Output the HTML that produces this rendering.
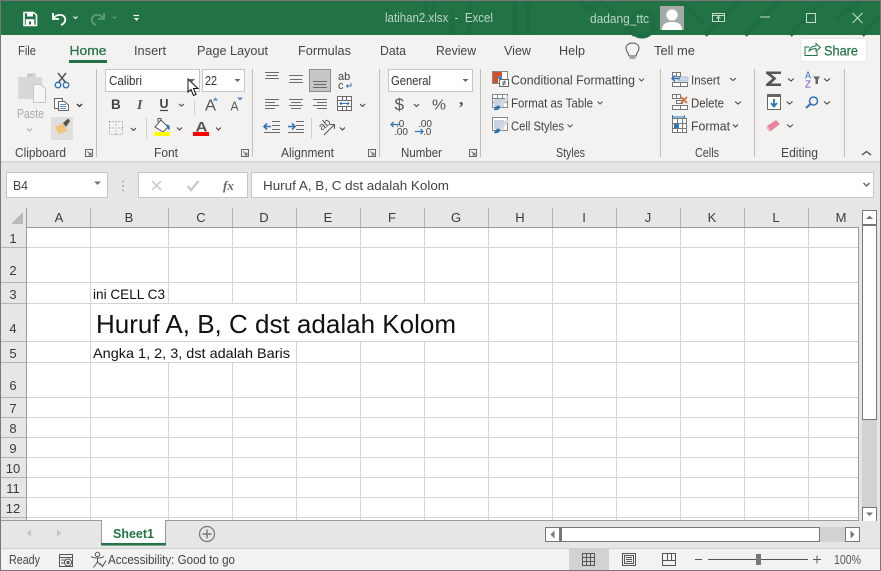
<!DOCTYPE html>
<html><head><meta charset="utf-8"><style>
html,body{margin:0;padding:0;width:881px;height:571px;overflow:hidden;background:#fff}
svg{display:block}
text{font-family:"Liberation Sans",sans-serif;font-size:13px;fill:#444}
.g{stroke:#d4d4d4;stroke-width:1;fill:none}
.h{font-size:13px;fill:#3a3a3a;text-anchor:middle}
.c{fill:none;stroke:#555;stroke-width:1.3}
.l{stroke:#6a6a6a;stroke-width:1;fill:none}
.sep{stroke:#bdbdbd;stroke-width:1;fill:none}
</style></head><body>
<svg width="881" height="571" viewBox="0 0 881 571" xmlns="http://www.w3.org/2000/svg" shape-rendering="auto">
<rect width="881" height="571" fill="#f3f2f1"/>
<!-- title bar -->
<rect x="0" y="0" width="881" height="35" fill="#217346"/>
<g fill="none" stroke="#1f6d42" stroke-width="5">
<path d="M426 0V14M434 0V14M452 10V35M470 0V35M515 0V35M527 0V35M600 0L635 35M680 0L705 25"/>
<circle cx="642" cy="24" r="12"/><circle cx="590" cy="-2" r="10"/><path d="M705 35L740 0M745 35L780 0M790 35L825 0M835 20L860 0M862 35L881 15"/>
</g>
<!-- QAT -->
<g fill="none" stroke="#fff" stroke-width="1.6">
<path d="M24 12.500H33.500L36.500 15V25.500H24Z"/><rect x="27" y="13" width="6" height="3.500" fill="#fff" stroke="none"/><rect x="26.500" y="20" width="7" height="5" fill="#217346"/><rect x="27" y="20.500" width="6" height="4.500" fill="#fff" stroke="none"/><rect x="29" y="21.500" width="2" height="3" fill="#217346" stroke="none"/>
<path d="M53 13V19H59" stroke-width="1.800"/><path d="M53.500 18.500C56 14 63 13.500 65 18C66 21 64 24 61 25" stroke-width="1.800"/>
<path d="M73.500 16.500L75.500 18.500L77.500 16.500" stroke-width="1"/>
<g stroke="#5f9a79"><path d="M104 13V19H98" stroke-width="1.800"/><path d="M103.500 18.500C101 14 94 13.500 92 18C91 21 93 24 96 25" stroke-width="1.800"/><path d="M112.500 16.500L114.500 18.500L116.500 16.500" stroke-width="1"/></g>
<path d="M133.500 15.500H139" stroke-width="1.200"/><path d="M134 18H139L136.500 21Z" fill="#fff" stroke="none"/>
</g>
<text x="385" y="22" textLength="108" lengthAdjust="spacingAndGlyphs" style="fill:#bcd5c6;font-size:12.500px">latihan2.xlsx&#160; -&#160; Excel</text>
<text x="590" y="23" textLength="59" lengthAdjust="spacingAndGlyphs" style="fill:#bcd5c6;font-size:12.500px">dadang_ttc</text>
<rect x="660" y="6" width="24" height="24" fill="#a5aaa7"/>
<circle cx="672" cy="15" r="5.600" fill="#fff"/><path d="M662 30C662 24 666 22 672 22C678 22 682 24 682 30Z" fill="#fff"/>
<g fill="none" stroke="#c6dccf" stroke-width="1">
<rect x="712.500" y="13.500" width="12" height="8"/><path d="M712.500 15.500H724.500M718.500 21V17M716.500 18.500L718.500 16.500L720.500 18.500"/>
<path d="M760 17H770"/><rect x="806.500" y="13.500" width="9" height="9"/><path d="M852.500 13L862.500 23M862.500 13L852.500 23"/>
</g>
<!-- tabs -->
<text x="18" y="55" textLength="18" lengthAdjust="spacingAndGlyphs">File</text>
<text x="69.500" y="55" textLength="37" lengthAdjust="spacingAndGlyphs" style="fill:#217346;font-size:13px;stroke:#217346;stroke-width:.25">Home</text>
<rect x="69" y="60" width="38" height="3" fill="#217346"/>
<text x="134" y="55" textLength="32" lengthAdjust="spacingAndGlyphs">Insert</text>
<text x="197" y="55" textLength="71" lengthAdjust="spacingAndGlyphs">Page Layout</text>
<text x="298" y="55" textLength="53" lengthAdjust="spacingAndGlyphs">Formulas</text>
<text x="380" y="55" textLength="26" lengthAdjust="spacingAndGlyphs">Data</text>
<text x="436" y="55" textLength="40" lengthAdjust="spacingAndGlyphs">Review</text>
<text x="504" y="55" textLength="27" lengthAdjust="spacingAndGlyphs">View</text>
<text x="559" y="55" textLength="26" lengthAdjust="spacingAndGlyphs">Help</text>
<path d="M629 56C628 52 626 51 626 48C626 45 629 43 632.500 43C636 43 639 45 639 48C639 51 637 52 636 56ZM629.500 58H635.500" fill="none" stroke="#555" stroke-width="1"/>
<text x="654" y="55" textLength="41" lengthAdjust="spacingAndGlyphs">Tell me</text>
<rect x="800.500" y="38.500" width="66" height="23" rx="2" fill="#fff" stroke="#e8e7e6"/>
<path d="M809.500 47H805V55.500H817V51M809 51C810 47 813 46 816 46V43.500L820.500 47.500L816 51V48.500C813 48.500 811 49.500 809 51Z" fill="none" stroke="#217346" stroke-width="1"/>
<text x="824" y="55.500" textLength="34" lengthAdjust="spacingAndGlyphs" style="fill:#217346;font-size:13.500px;stroke:#217346;stroke-width:.2">Share</text>
<!-- ribbon separators -->
<path class="sep" d="M96.500 69V157M252.500 69V157M379.500 69V157M480.500 69V157M660.500 69V157M754.500 69V157M844.500 69V157"/>
<path d="M194.500 100V115" stroke="#d0d0d0"/><path d="M146.500 118V139" stroke="#d0d0d0"/><path d="M311.500 118V139" stroke="#d0d0d0"/>
<!-- Clipboard -->
<path d="M18 77H28V73H36V77H42V88H33V99H20C18.500 99 18 98.500 18 97Z" fill="#d8d7d9"/>
<rect x="27" y="74" width="6" height="3" fill="#c9c8ca"/>
<path d="M33.500 84.500H41L45.500 89V102.500H33.500Z" fill="#f7f6f6" stroke="#c4c3c5"/>
<text x="17" y="118" textLength="27" lengthAdjust="spacingAndGlyphs" style="fill:#aaa">Paste</text>
<path d="M27 128.500L29.500 131L32 128.500" fill="none" stroke="#aaa"/>
<path d="M58 73L66 83M66 73L58 83" stroke="#555" stroke-width="1.500" fill="none"/>
<circle cx="58" cy="85" r="2.800" fill="none" stroke="#2e75b6" stroke-width="1.300"/><circle cx="66" cy="85" r="2.800" fill="none" stroke="#2e75b6" stroke-width="1.300"/>
<g fill="#fff" stroke="#666"><rect x="54.500" y="98.500" width="8" height="10"/><path d="M58.500 101.500H64.500L68.500 105V110.500H58.500Z"/></g>
<path d="M60 104.500H66M60 106.500H66M60 108.500H66" stroke="#5b8cbd" stroke-width="1"/>
<path d="M77 104L79.500 106.500L82 104" class="c" style="stroke:#333"/>
<rect x="51" y="117" width="22" height="23" fill="#e1dfdd"/>
<path d="M55 127L63 123L67 131L59 134Z" fill="#f0c57b"/><path d="M63 123L68 118.500L70 121L66 127Z" fill="#555"/>
<text x="15" y="157" textLength="51" lengthAdjust="spacingAndGlyphs">Clipboard</text>
<g fill="none" stroke="#666"><path d="M85.500 149.500H92.500V156.500H85.500ZM87.500 151.500L91 155M91 152.500V155H88.500"/>
<path d="M241.500 149.500H248.500V156.500H241.500ZM243.500 151.500L247 155M247 152.500V155H244.500"/>
<path d="M368.500 149.500H375.500V156.500H368.500ZM370.500 151.500L374 155M374 152.500V155H371.500"/>
<path d="M469.500 149.500H476.500V156.500H469.500ZM471.500 151.500L475 155M475 152.500V155H472.500"/></g>
<!-- Font -->
<rect x="105.500" y="69.500" width="94" height="22" fill="#fff" stroke="#c6c6c6"/>
<rect x="202.500" y="69.500" width="42" height="22" fill="#fff" stroke="#c6c6c6"/>
<text x="109" y="85" textLength="33" lengthAdjust="spacingAndGlyphs" style="fill:#333">Calibri</text>
<text x="205" y="85" textLength="12" lengthAdjust="spacingAndGlyphs" style="fill:#333">22</text>
<path d="M189 79H195L192 82Z" fill="#666"/><path d="M234.500 79H240.500L237.500 82Z" fill="#666"/>
<path d="M188 79V92L191 89.500L193.500 95.500L196 94.500L193.500 88.500H198Z" fill="#fff" stroke="#111" stroke-width="1"/>
<text x="111" y="109" style="font-weight:bold;font-size:13.500px;fill:#444">B</text>
<text x="137" y="109" style="font-style:italic;font-family:'Liberation Serif',serif;font-weight:bold;font-size:14px;fill:#555">I</text>
<text x="159.500" y="108" style="font-weight:bold;font-size:12.500px;fill:#444">U</text><path d="M160 110.500H168" stroke="#444" stroke-width="1.200"/>
<g fill="none" stroke="#444" stroke-width="1.100"><path d="M179 104L181.500 106L184 104M131 128L133.500 130.500L136 128M177 127.500L179.500 130L182 127.500M216 127.500L218.500 130L221 127.500"/></g>
<text x="205" y="110.500" textLength="11" lengthAdjust="spacingAndGlyphs" style="font-size:16px;fill:#555">A</text>
<path d="M213 100.500L215.500 97.500L218 100.500Z" fill="#4a86c5"/>
<text x="230.500" y="110.500" textLength="8" lengthAdjust="spacingAndGlyphs" style="font-size:13px;fill:#555">A</text>
<path d="M237 97.500H243L240 100.500Z" fill="#4a86c5"/>
<path d="M109.500 121.500H122.500V134.500H109.500ZM116 121.500V134.500M109.500 128H122.500" fill="none" stroke="#888" stroke-dasharray="1 2"/>
<path d="M155 127L161 120L168 127L163 132Z" fill="#fff" stroke="#555"/><path d="M158 122V118.500H161V121" fill="none" stroke="#555"/><path d="M167 124.500C170 125 170.500 128 169 130C167.500 129 166.500 127 167 124.500Z" fill="#2e75b6"/>
<rect x="154" y="132" width="16" height="4" fill="#ff0"/>
<text x="195.500" y="131.500" textLength="12" lengthAdjust="spacingAndGlyphs" style="font-size:14px;font-weight:bold;fill:#555">A</text>
<rect x="193" y="132" width="16" height="4" fill="#f00"/>
<text x="154" y="157" textLength="24" lengthAdjust="spacingAndGlyphs">Font</text>
<!-- Alignment -->
<rect x="309.500" y="69.500" width="21" height="22" fill="#c8c6c4" stroke="#8d8d8d"/>
<path class="l" d="M265 72.500H279M266 75.500H278M265 78.500H279M289 75.500H303M290 79.500H302M289 82.500H303M313 81.500H327M314 84.500H326M313 87.500H327"/>
<path class="l" d="M265 99.500H279M265 102.500H275M265 105.500H279M265 108.500H275M289 99.500H303M291 102.500H301M289 105.500H303M291 108.500H301M313 99.500H327M317 102.500H327M313 105.500H327M317 108.500H327"/>
<rect class="l" x="337.500" y="96.500" width="14" height="14" style="fill:#fff"/>
<path class="l" d="M337.500 100.500H351.500M337.500 106.500H351.500M342.500 96.500V100.500M346.500 96.500V100.500M342.500 106.500V110.500M346.500 106.500V110.500"/>
<path d="M340 103.500H349M341.500 102L340 103.500L341.500 105M347.500 102L349 103.500L347.500 105" fill="none" stroke="#2e75b6"/>
<path class="l" d="M272 121.500H280M272 125.500H280M272 129.500H280M264 132.500H280"/>
<path class="l" d="M296 121.500H304M296 125.500H304M296 129.500H304M288 132.500H304"/>
<path d="M264 126.500H271M267 123.500L264 126.500L267 129.500" fill="none" stroke="#2e75b6" stroke-width="1.600"/><path d="M288 126.500H295M292 123.500L295 126.500L292 129.500" fill="none" stroke="#2e75b6" stroke-width="1.600"/>
<text x="338" y="80" style="font-size:11px;fill:#444">ab</text><text x="338" y="89" style="font-size:11px;fill:#444">c</text>
<path d="M351 83V86H346.500M348 84.500L346.500 86L348 87.500" fill="none" stroke="#2e75b6"/>
<text x="0" y="0" transform="translate(322 131) rotate(-40)" style="font-size:11px;fill:#555">ab</text>
<path d="M324 135L334 125M330 124.500H334.500V129" fill="none" stroke="#555"/>
<g fill="none" stroke="#444" stroke-width="1.100"><path d="M360 104L362.500 106.500L365 104M340 127.500L342.500 130L345 127.500"/></g>
<text x="281" y="157" textLength="53" lengthAdjust="spacingAndGlyphs">Alignment</text>
<!-- Number -->
<rect x="388.500" y="69.500" width="84" height="22" fill="#fff" stroke="#c6c6c6"/>
<text x="391" y="85" textLength="40" lengthAdjust="spacingAndGlyphs" style="fill:#333">General</text>
<path d="M462.500 79H468.500L465.500 82Z" fill="#666"/>
<text x="394.500" y="110" style="font-size:17px;fill:#555">$</text>
<path d="M414 104L416.500 106.500L419 104" fill="none" stroke="#444" stroke-width="1.100"/>
<text x="432" y="109.500" textLength="14" lengthAdjust="spacingAndGlyphs" style="font-size:15px;fill:#555">%</text>
<text x="459" y="104.500" style="font-size:18px;font-weight:bold;font-family:'Liberation Serif',serif;fill:#555">,</text>
<text x="396" y="127" style="font-size:10px;fill:#444">.0</text><text x="394" y="135" style="font-size:10px;fill:#444">.00</text>
<path d="M391 124.500H399M393.500 122L391 124.500L393.500 127" fill="none" stroke="#2e75b6" stroke-width="1.300"/>
<text x="418" y="127" style="font-size:10px;fill:#444">.00</text><text x="423" y="135" style="font-size:10px;fill:#444">.0</text>
<path d="M415 131.500H423M420.500 129L423 131.500L420.500 134" fill="none" stroke="#2e75b6" stroke-width="1.300"/>
<text x="401" y="157" textLength="41" lengthAdjust="spacingAndGlyphs">Number</text>
<!-- Styles -->
<rect x="492.500" y="71.500" width="15" height="12" fill="#fff" stroke="#888"/>
<rect x="493" y="72" width="9" height="4" fill="#d0502a"/><rect x="493" y="76" width="5" height="7" fill="#d0502a"/><rect x="498" y="76" width="4" height="3" fill="#4a86c5"/>
<rect x="499.500" y="79.500" width="9" height="7" fill="#fff" stroke="#666"/><path d="M502 82H506M502 84H506M505 80.500L503 85.500" stroke="#444" stroke-width=".8"/>
<text x="511" y="84.500" textLength="124" lengthAdjust="spacingAndGlyphs">Conditional Formatting</text>
<path d="M639 78.500L641.500 81L644 78.500M597.500 101.500L600 104L602.500 101.500M567.500 124.500L570 127L572.500 124.500" fill="none" stroke="#555" stroke-width="1.100"/>
<g fill="none" stroke="#888"><rect x="492.500" y="94.500" width="15" height="13" fill="#fff"/><path d="M492.500 98.500H507.500M492.500 102.500H507.500M497.500 94.500V107.500M502.500 94.500V107.500"/>
<rect x="492.500" y="117.500" width="15" height="13" fill="#fff"/></g>
<rect x="494" y="99" width="10" height="8" fill="#c5d3e2"/><rect x="494" y="120" width="10" height="9" fill="#c5d3e2"/>
<path d="M498 106L507 96L509 98L501 108Z M498 129L507 119L509 121L501 131Z" fill="#d9d9d9"/>
<path d="M494 110C495 106 498 105 500 106C501 108 499 111 494 110ZM494 133C495 129 498 128 500 129C501 131 499 134 494 133Z" fill="#2e75b6"/>
<text x="511" y="107.500" textLength="82" lengthAdjust="spacingAndGlyphs">Format as Table</text>
<text x="511" y="130.500" textLength="53" lengthAdjust="spacingAndGlyphs">Cell Styles</text>
<text x="556" y="157" textLength="29" lengthAdjust="spacingAndGlyphs">Styles</text>
<!-- Cells -->
<g fill="#fff" stroke="#777">
<path d="M672.500 72.500H680.500V76.500H672.500ZM672.500 82.500H680.500V86.500H672.500ZM680.500 82.500V86.500H687.500V82.500ZM676.500 72.500V76.500"/>
<path d="M672.500 94.500H680.500V98.500H672.500ZM676.500 94.500V98.500M672.500 105.500H680.500V109.500H672.500ZM680.500 105.500V109.500H687.500V105.500ZM676.500 100.500H682.500V103.500H676.500Z"/>
<rect x="672.500" y="118.500" width="14" height="14"/>
<path d="M672.500 123.500H686.500M672.500 128.500H686.500M677.500 118.500V132.500M682.500 118.500V132.500" fill="none"/>
</g>
<rect x="678" y="77" width="10" height="4" fill="#cfdcea" stroke="#8fa8c2" stroke-width=".6"/>
<path d="M672 78.500H680M675 75.500L672 78.500L675 81.500" fill="none" stroke="#2e75b6" stroke-width="1.500"/>
<path d="M681 97L687 103M687 97L681 103" stroke="#d9663e" stroke-width="1.600"/>
<rect x="674" y="124" width="5" height="4" fill="#2e75b6"/>
<path d="M672.500 115V119M684.500 115V119M673 117H684" fill="none" stroke="#2e75b6"/>
<text x="691" y="84.500" textLength="29" lengthAdjust="spacingAndGlyphs">Insert</text>
<text x="691" y="107.500" textLength="33" lengthAdjust="spacingAndGlyphs">Delete</text>
<text x="691" y="130.500" textLength="39" lengthAdjust="spacingAndGlyphs">Format</text>
<path d="M730 78L733 80.500L736 78M735 101.500L738 104L741 101.500M733 124.500L735.500 127L738 124.500" fill="none" stroke="#444" stroke-width="1.100"/>
<text x="695" y="157" textLength="24" lengthAdjust="spacingAndGlyphs">Cells</text>
<!-- Editing -->
<path d="M766 71.500H781V74H771L776.500 78.500L771 83.500H781V86H766V84L772.500 78.500L766 73.500Z" fill="#555"/>
<path d="M788 78.500L791 81L794 78.500M786.500 101.500L789.500 104L792.500 101.500M787 124.500L790 127L793 124.500M824 78.500L827 81L830 78.500M824 101.500L827 104L830 101.500" fill="none" stroke="#444" stroke-width="1.100"/>
<text x="805" y="78.500" textLength="6" lengthAdjust="spacingAndGlyphs" style="font-size:10px;fill:#2e75b6">A</text>
<text x="805" y="87.500" textLength="6" lengthAdjust="spacingAndGlyphs" style="font-size:10px;fill:#7a4fb5">Z</text>
<path d="M813 76.500H820L818 79.500V84H815.500V79.500Z" fill="#666"/>
<rect x="767.500" y="94.500" width="13" height="15" fill="#fff" stroke="#666"/><rect x="767" y="94" width="14" height="3" fill="#666"/>
<path d="M774 99V106M771 103L774 106.500L777 103" fill="none" stroke="#2e75b6" stroke-width="1.800"/>
<circle cx="813.500" cy="101" r="4" fill="none" stroke="#2e75b6" stroke-width="1.500"/><path d="M810.500 104L806 108" stroke="#2e75b6" stroke-width="2"/>
<path d="M767 126L776 120L780 124L771 131Z" fill="#e8879b"/><path d="M767 126L771 131L769 131.500L766.500 128Z" fill="#f0b3bf"/>
<text x="781" y="157" textLength="37" lengthAdjust="spacingAndGlyphs">Editing</text>
<path d="M862 155L866.500 151.500L871 155" fill="none" stroke="#444" stroke-width="1.200"/>
<!-- shadow / formula area -->
<rect x="0" y="161" width="881" height="47" fill="#e6e6e6"/>
<rect x="0" y="161" width="881" height="1" fill="#d0d0d0"/>
<rect x="0" y="162" width="881" height="1" fill="#dcdcdc"/>
<rect x="6.500" y="172.500" width="101" height="25" fill="#fff" stroke="#c6c6c6"/>
<text x="13" y="190" textLength="15" lengthAdjust="spacingAndGlyphs">B4</text>
<path d="M94 181.500H101L97.500 185Z" fill="#777"/>
<path d="M123 180.500V182.500M123 185V187M123 189.500V191.500" stroke="#aaa" stroke-width="1.500"/>
<rect x="138.500" y="172.500" width="109" height="25" fill="#fff" stroke="#c6c6c6"/>
<rect x="251.500" y="172.500" width="622" height="25" fill="#fff" stroke="#c6c6c6"/>
<path d="M152 181L161 190M161 181L152 190" stroke="#c8c8c8" stroke-width="1.500"/>
<path d="M187.500 186L191 190L198.500 181" stroke="#c8c8c8" stroke-width="2.200" fill="none"/>
<text x="223" y="190" style="font-family:'Liberation Serif',serif;font-style:italic;font-weight:bold;font-size:13px;fill:#666">fx</text>
<text x="263" y="190" textLength="186" lengthAdjust="spacingAndGlyphs">Huruf A, B, C dst adalah Kolom</text>
<path d="M863.500 183L866.500 186L869.500 183" fill="none" stroke="#666" stroke-width="1.500"/>
<!-- grid -->
<rect x="0" y="208" width="881" height="313" fill="#e6e6e6"/>
<rect x="27" y="228" width="831" height="292" fill="#fff"/>
<path class="g" d="M90.500 228V520M168.500 228V520M232.500 228V520M296.500 228V520M360.500 228V520M424.500 228V520M488.500 228V520M552.500 228V520M616.500 228V520M680.500 228V520M744.500 228V520M808.500 228V520"/>
<path class="g" d="M27 247.500H858M27 282.500H858M27 303.500H858M27 341.500H858M27 362.500H858M27 397.500H858M27 417.500H858M27 437.500H858M27 457.500H858M27 477.500H858M27 497.500H858M27 517.500H858"/>
<rect x="91" y="283" width="77" height="20" fill="#fff"/><rect x="91" y="304" width="397" height="37" fill="#fff"/><rect x="91" y="342" width="205" height="20" fill="#fff"/>
<path d="M168.500 283V303" class="g"/>
<path d="M26.500 208V520M27 227.500H858M858.500 227V520M0 520.500H859" stroke="#9b9b9b" fill="none"/>
<path d="M90.500 208V227M168.500 208V227M232.500 208V227M296.500 208V227M360.500 208V227M424.500 208V227M488.500 208V227M552.500 208V227M616.500 208V227M680.500 208V227M744.500 208V227M808.500 208V227" stroke="#b4b4b4" fill="none"/>
<path d="M0 247.500H26M0 282.500H26M0 303.500H26M0 341.500H26M0 362.500H26M0 397.500H26M0 417.500H26M0 437.500H26M0 457.500H26M0 477.500H26M0 497.500H26M0 517.500H26" stroke="#b4b4b4" fill="none"/>
<path d="M11 224H23V212Z" fill="#b9b9b9"/>
<text class="h" x="59" y="222">A</text><text class="h" x="129" y="222">B</text><text class="h" x="201" y="222">C</text><text class="h" x="264" y="222">D</text><text class="h" x="328" y="222">E</text><text class="h" x="392" y="222">F</text><text class="h" x="456" y="222">G</text><text class="h" x="520" y="222">H</text><text class="h" x="584" y="222">I</text><text class="h" x="648" y="222">J</text><text class="h" x="712" y="222">K</text><text class="h" x="776" y="222">L</text><text class="h" x="841" y="222">M</text>
<text class="h" x="13" y="243">1</text><text class="h" x="13" y="275">2</text><text class="h" x="13" y="299">3</text><text class="h" x="13" y="333">4</text><text class="h" x="13" y="358">5</text><text class="h" x="13" y="390">6</text><text class="h" x="13" y="413">7</text><text class="h" x="13" y="433">8</text><text class="h" x="13" y="453">9</text><text class="h" x="13" y="473">10</text><text class="h" x="13" y="493">11</text><text class="h" x="13" y="513">12</text>
<text x="93" y="299" textLength="72" lengthAdjust="spacingAndGlyphs" style="font-size:14px;fill:#111">ini CELL C3</text>
<text x="96" y="333" textLength="360" lengthAdjust="spacingAndGlyphs" style="font-size:26px;fill:#111">Huruf A, B, C dst adalah Kolom</text>
<text x="93" y="358" textLength="197" lengthAdjust="spacingAndGlyphs" style="font-size:14px;fill:#111">Angka 1, 2, 3, dst adalah Baris</text>
<!-- v scrollbar -->
<rect x="862" y="225" width="15" height="282" fill="#d2d2d2"/>
<rect x="862.500" y="210.500" width="14" height="14" fill="#fff" stroke="#777"/>
<rect x="862.500" y="224.500" width="14" height="195" fill="#fff" stroke="#777"/>
<rect x="862" y="224" width="15" height="2" fill="#777"/>
<rect x="862.500" y="507.500" width="14" height="14" fill="#fff" stroke="#777"/>
<path d="M866 219H873L869.500 215.500Z" fill="#777"/><path d="M866 512.500H873L869.500 516Z" fill="#777"/>
<!-- sheet tabs -->
<rect x="0" y="521" width="881" height="27" fill="#e6e6e6"/>
<path d="M0 520.500H101M165 520.500H859" stroke="#9b9b9b"/>
<path d="M31 529V537L27 533ZM57 529V537L61 533Z" fill="#c4c4c4"/>
<path d="M101.500 520V544M165.500 520V544" stroke="#9b9b9b"/><rect x="102" y="520" width="63" height="24" fill="#fff"/><rect x="101" y="543" width="65" height="2.500" fill="#217346"/>
<text x="113" y="538" textLength="41" lengthAdjust="spacingAndGlyphs" style="fill:#217346;font-weight:bold;font-size:13px">Sheet1</text>
<circle cx="207" cy="534" r="7.500" fill="none" stroke="#777" stroke-width="1.200"/><path d="M202.500 534H211.500M207 529.500V538.500" stroke="#777" stroke-width="1.400"/>
<rect x="545.500" y="527.500" width="14" height="14" fill="#fff" stroke="#777"/>
<rect x="560" y="527" width="285" height="15" fill="#d2d2d2"/>
<rect x="560.500" y="527.500" width="259" height="14" fill="#fff" stroke="#777"/><rect x="560" y="527" width="2" height="15" fill="#777"/>
<rect x="845.500" y="527.500" width="14" height="14" fill="#fff" stroke="#777"/>
<path d="M554.500 530.500V538.500L550.500 534.500ZM850.500 530.500V538.500L854.500 534.500Z" fill="#777"/>
<!-- status -->
<rect x="0" y="548" width="881" height="23" fill="#f3f2f1"/>
<rect x="0" y="548" width="881" height="1" fill="#cfcfcf"/>
<text x="9" y="564" textLength="31" lengthAdjust="spacingAndGlyphs" style="font-size:12.500px">Ready</text>
<g fill="none" stroke="#555"><rect x="59.500" y="554.500" width="13" height="12"/><path d="M59.500 557.500H72.500M61 560H66M61 563H65"/><circle cx="68" cy="562.500" r="3.500" fill="#f3f2f1"/></g>
<circle cx="68" cy="562.500" r="1.600" fill="#555"/>
<g fill="none" stroke="#555"><circle cx="97.500" cy="554.500" r="2.200"/><path d="M91 556.500C94 558.500 101 558.500 104 556.500M97.500 558V562L93.500 567.500M97.500 562L100.500 565M100.500 563.500L102.500 566.500L106 560.500"/></g>
<text x="108" y="564" textLength="127" lengthAdjust="spacingAndGlyphs" style="font-size:12.500px">Accessibility: Good to go</text>
<rect x="569" y="549" width="40" height="21" fill="#d2d2d2"/>
<g fill="none" stroke="#555"><path d="M582.500 553.500H594.500V565.500H582.500ZM586.500 553.500V565.500M590.500 553.500V565.500M582.500 557.500H594.500M582.500 561.500H594.500"/>
<rect x="622.500" y="553.500" width="13" height="12"/><rect x="624.500" y="555.500" width="9" height="8"/><path d="M626 557.500H632M626 559.500H632M626 561.500H632"/>
<path d="M662.500 553.500H675.500V565.500H662.500ZM662.500 560.500H675.500M667.500 553.500V560.500M671.500 553.500V560.500"/></g>
<path d="M695 559.500H702M708 559.500H808M813 559.500H821M817 555.500V563.500" stroke="#555" fill="none"/>
<rect x="756" y="554" width="5" height="11" fill="#777"/>
<text x="834" y="564" textLength="27" lengthAdjust="spacingAndGlyphs" style="font-size:12.500px;fill:#555">100%</text>
<!-- outer border -->
<rect x="0.500" y="0.500" width="880" height="570" fill="none" stroke="#777"/>
</svg>
</body></html>
